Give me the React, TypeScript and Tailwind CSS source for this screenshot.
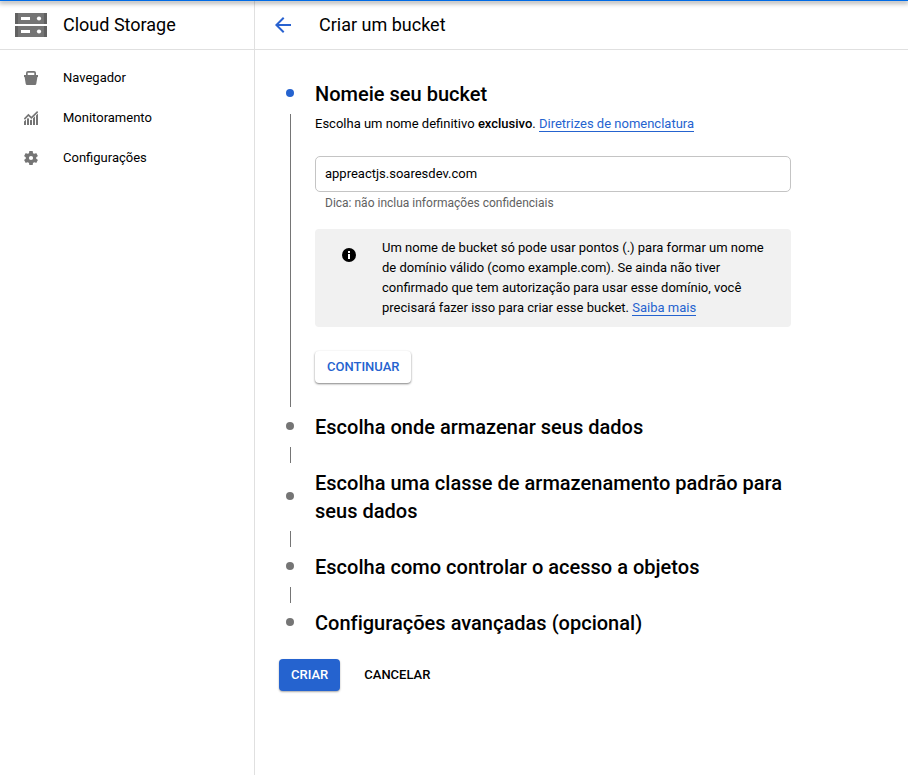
import React from "react";

function StorageLogo() {
  return (
    <svg width="32" height="24" viewBox="0 0 32 24" shapeRendering="crispEdges" aria-hidden="true">
      {[0, 13].map((y) => (
        <g key={y} transform={`translate(0 ${y})`}>
          <rect width="32" height="11" fill="#757575" />
          <rect width="3" height="11" fill="#616161" />
          <rect x="29" width="3" height="11" fill="#616161" />
          <rect x="6" y="4" width="9" height="3" fill="#fff" />
          <circle cx="24" cy="5.5" r="2.1" fill="#fff" shapeRendering="auto" />
        </g>
      ))}
    </svg>
  );
}

function BucketIcon() {
  return (
    <svg width="14" height="14" viewBox="0 0 14 14" fill="#757575" aria-hidden="true">
      <path fillRule="evenodd" d="M4 0h6a2 2 0 0 1 2 2v2h2v2h-.6l-1.1 6.8A1.4 1.4 0 0 1 10.9 14H3.1a1.4 1.4 0 0 1-1.4-1.2L.6 6H0V4h2V2a2 2 0 0 1 2-2Zm-.3 1.7V4h6.6V1.7Z" />
    </svg>
  );
}

function ChartIcon() {
  return (
    <svg width="14" height="14" viewBox="0 0 14 14" fill="#757575" aria-hidden="true">
      <path d="M0 10.5 2 8.6V14H0ZM3 7.8l1-.8 1 .8V14H3ZM6 8.8l1 .5 1-1V14H6ZM9 7.3l2-2V14H9ZM12 4.4l2-2V14h-2Z" />
      <path d="M.3 8.1 4.4 3.9l3 3L13.7.6" fill="none" stroke="#757575" strokeWidth="1.7" />
    </svg>
  );
}

function GearIcon() {
  return (
    <svg width="14" height="14" viewBox="2.2 2 19.6 20" fill="#757575" aria-hidden="true">
      <path d="M19.43 12.98c.04-.32.07-.64.07-.98s-.03-.66-.07-.98l2.11-1.65c.19-.15.24-.42.12-.64l-2-3.46c-.12-.22-.39-.3-.61-.22l-2.49 1c-.52-.4-1.08-.73-1.69-.98l-.38-2.65A.49.49 0 0 0 14 2h-4c-.25 0-.46.18-.49.42l-.38 2.65c-.61.25-1.17.59-1.69.98l-2.49-1c-.23-.09-.49 0-.61.22l-2 3.46c-.13.22-.07.49.12.64l2.11 1.65c-.04.32-.07.65-.07.98s.03.66.07.98l-2.11 1.65c-.19.15-.24.42-.12.64l2 3.46c.12.22.39.3.61.22l2.49-1c.52.4 1.08.73 1.69.98l.38 2.65c.03.24.24.42.49.42h4c.25 0 .46-.18.49-.42l.38-2.65c.61-.25 1.17-.59 1.69-.98l2.49 1c.23.09.49 0 .61-.22l2-3.46c.12-.22.07-.49-.12-.64l-2.11-1.65ZM12 15a3 3 0 1 1 0-6 3 3 0 0 1 0 6Z" />
    </svg>
  );
}

function BackArrow() {
  return (
    <svg width="16" height="16" viewBox="4 4 16 16" fill="#2962d0" aria-hidden="true">
      <path d="M20 11H7.83l5.59-5.59L12 4l-8 8 8 8 1.41-1.41L7.83 13H20v-2z" />
    </svg>
  );
}

function InfoIcon() {
  return (
    <svg width="14" height="14" viewBox="0 0 14 14" aria-hidden="true">
      <circle cx="7" cy="7" r="7" fill="#000" />
      <path d="M6 3h2v2H6ZM6 6h2v5H6Z" fill="#fff" />
    </svg>
  );
}

const navItems = [
  { label: "Navegador", icon: <BucketIcon /> },
  { label: "Monitoramento", icon: <ChartIcon /> },
  { label: "Configurações", icon: <GearIcon /> },
];

type StepProps = {
  title: string;
  active?: boolean;
  last?: boolean;
  children?: React.ReactNode;
};

function Step({ title, active, last, children }: StepProps) {
  return (
    <section className="grid grid-cols-[30px_476px]">
      <div className="flex items-center pb-0.5 pl-px">
        <span className={`size-2 rounded-full ${active ? "bg-[#2563cf]" : "bg-[#757575]"}`} />
      </div>
      <h2 className="text-[20px] leading-7 font-medium tracking-[0.015px]">{title}</h2>
      {!last && (
        <>
          <div className="flex py-1.5 pl-[5px]">
            <span className="w-px bg-[#757575]" />
          </div>
          <div className="min-h-7">{children}</div>
        </>
      )}
    </section>
  );
}

function Link({ children }: { children: React.ReactNode }) {
  return (
    <a href="#" className="border-b border-[#2563cf] text-[#2563cf]">
      {children}
    </a>
  );
}

export default function App() {
  return (
    <div className="relative flex h-screen overflow-hidden bg-white font-[Roboto,sans-serif] text-[13px] leading-5 text-black">
      <div className="absolute inset-x-0 top-0 h-px bg-[#006be6] shadow-[0_1px_5px_1px_rgba(0,0,0,0.45)]" />
      <aside className="w-[255px] shrink-0 border-r border-[#e0e0e0]">
        <header className="flex h-[50px] items-center gap-4 border-b border-[#e0e0e0] pl-[15px]">
          <StorageLogo />
          <h1 className="text-[18px] leading-6">Cloud Storage</h1>
        </header>
        <nav className="pt-2">
          {navItems.map((item) => (
            <a key={item.label} href="#" className="flex h-10 items-center gap-[25px] pl-6">
              {item.icon}
              <span>{item.label}</span>
            </a>
          ))}
        </nav>
      </aside>

      <main className="min-w-0 flex-1">
        <header className="flex h-[50px] items-center gap-7 border-b border-[#e0e0e0] pl-5">
          <BackArrow />
          <h1 className="text-[18px] leading-6">Criar um bucket</h1>
        </header>

        <div className="pt-[30px] pl-[30px]">
          <Step title="Nomeie seu bucket" active>
            <div className="flex flex-col items-start pt-1.5 pb-[30px]">
              <p>
                Escolha um nome definitivo <b className="font-medium">exclusivo</b>. <Link>Diretrizes de nomenclatura</Link>
              </p>
              <input
                className="mt-[22px] h-9 w-full rounded-[5px] border border-[#c4c4c4] px-[9px] pb-0.5 outline-none"
                defaultValue="appreactjs.soaresdev.com"
              />
              <p className="mt-[3px] pl-2.5 text-[12px] leading-4 text-[#616161]">
                Dica: não inclua informações confidenciais
              </p>
              <div className="mt-[18px] flex w-full gap-[26px] rounded bg-[#f1f1f1] py-[9px] pr-6 pl-[27px]">
                <div className="shrink-0 pt-2.5">
                  <InfoIcon />
                </div>
                <p>
                  Um nome de bucket só pode usar pontos (.) para formar um nome de domínio válido (como example.com). Se
                  ainda não tiver confirmado que tem autorização para usar esse domínio, você precisará fazer isso para
                  criar esse bucket. <Link>Saiba mais</Link>
                </p>
              </div>
              <button className="mt-6 h-8 rounded bg-white px-3 font-medium text-[#2563cf] shadow-[0_1px_2px_rgba(0,0,0,0.42),0_1px_3px_rgba(0,0,0,0.1)]">
                CONTINUAR
              </button>
            </div>
          </Step>
          <Step title="Escolha onde armazenar seus dados" />
          <Step title="Escolha uma classe de armazenamento padrão para seus dados" />
          <Step title="Escolha como controlar o acesso a objetos" />
          <Step title="Configurações avançadas (opcional)" last />
        </div>

        <div className="flex gap-3 pt-[22px] pl-6">
          <button className="h-8 rounded bg-[#2563cf] px-3 font-medium text-white shadow-[0_1px_2px_rgba(0,0,0,0.35)]">
            CRIAR
          </button>
          <button className="h-8 px-3 font-medium">CANCELAR</button>
        </div>
      </main>
    </div>
  );
}
